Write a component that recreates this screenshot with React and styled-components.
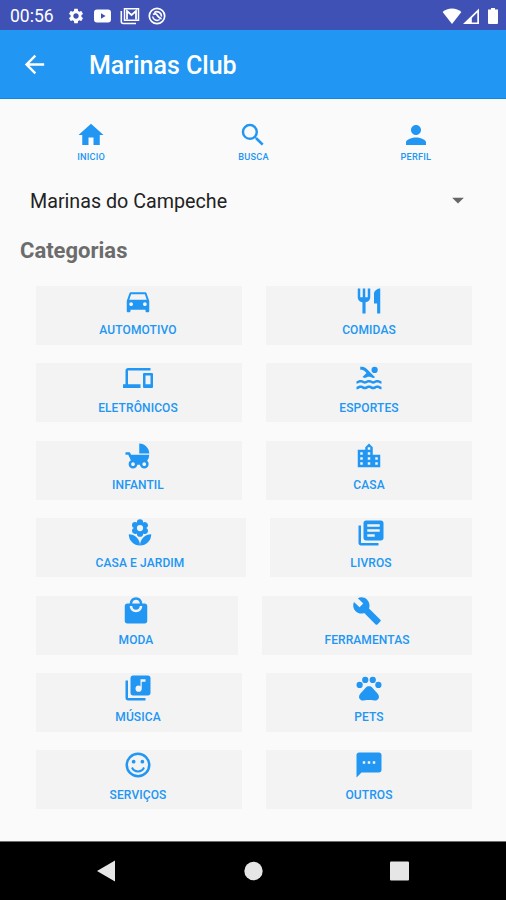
import styled, { createGlobalStyle } from "styled-components";
import {
  MdArrowBack,
  MdArrowDropDown,
  MdChildFriendly,
  MdDevices,
  MdHome,
  MdLibraryBooks,
  MdLibraryMusic,
  MdLocalFlorist,
  MdLocalMall,
  MdLocationCity,
  MdPerson,
  MdPets,
  MdPool,
  MdRestaurant,
  MdSearch,
  MdSettings,
  MdSms,
} from "react-icons/md";

const GlobalStyle = createGlobalStyle`
  * {
    box-sizing: border-box;
  }
  body {
    margin: 0;
    background: #fafafa;
    font-family: Roboto, "Liberation Sans", sans-serif;
  }
  svg {
    display: block;
    flex-shrink: 0;
  }
  button {
    border: none;
    padding: 0;
    font-family: inherit;
  }
`;

const Screen = styled.div`
  width: 506px;
  height: 900px;
  display: flex;
  flex-direction: column;
  background: #fafafa;
  overflow: hidden;
`;

const StStatusBar = styled.div`
  height: 30px;
  padding: 1px 6px 0 10px;
  display: flex;
  justify-content: space-between;
  align-items: center;
  background: #3f51b5;
  color: #fff;
`;

const StatusGroup = styled.div`
  display: flex;
  align-items: center;
  gap: ${({ $gap }) => $gap}px;
`;

const Clock = styled.span`
  width: 49px;
  padding-top: 1px;
  font-size: 17.5px;
  line-height: 20px;
`;

const AppBar = styled.header`
  height: 69px;
  padding: 0 20px;
  display: flex;
  align-items: center;
  gap: 40px;
  background: #2196f3;
  border-bottom: 1px solid #0d88e6;
  color: #fff;
`;

const AppTitle = styled.h1`
  margin: 4px 0 0;
  font-size: 25px;
  font-weight: 500;
  line-height: 30px;
`;

const Content = styled.main`
  flex: 1;
  display: flex;
  flex-direction: column;
`;

const TabRow = styled.nav`
  padding: 21px 9px 0 10px;
  display: grid;
  grid-template-columns: repeat(3, 1fr);
`;

const Tab = styled.button`
  height: 43px;
  display: flex;
  flex-direction: column;
  align-items: center;
  gap: 1px;
  background: transparent;
  color: #2196f3;
  font-size: 9.2px;
  font-weight: 500;
  letter-spacing: 0.2px;
  line-height: 12px;
`;

const Select = styled.div`
  height: 38px;
  margin-top: 19px;
  padding: 0 34px 0 30px;
  display: flex;
  justify-content: space-between;
  align-items: center;
  color: #222;
  font-size: 19.7px;
  svg {
    margin-bottom: 2px;
    color: #666;
  }
`;

const SectionTitle = styled.h2`
  margin: 17px 0 0 20px;
  color: #6c6c6c;
  font-size: 22px;
  font-weight: 700;
  line-height: 28px;
`;

const CategoryList = styled.div`
  margin: 21px 34px 0 36px;
  display: flex;
  flex-direction: column;
  gap: 18.4px;
`;

const CategoryRow = styled.div`
  display: flex;
  justify-content: space-between;
`;

const CategoryCard = styled.button`
  width: ${({ $width }) => $width}px;
  height: 59px;
  display: flex;
  flex-direction: column;
  align-items: center;
  gap: 6.4px;
  background: #f3f3f3;
  color: #2196f3;
  font-size: 12px;
  font-weight: 500;
  letter-spacing: 0.1px;
  line-height: 16px;
  &:first-child {
    padding-right: 2px;
  }
`;

const StNavBar = styled.div`
  height: 59px;
  padding: 0 96px;
  display: flex;
  justify-content: space-between;
  align-items: center;
  background: #000;
  border-top: 1px solid #6d6d6d;
`;

const CarIcon = ({ size }) => (
  <svg width={size} height={size} viewBox="0 0 24 24" fill="currentColor">
    <path d="M18.92 6.01C18.72 5.42 18.16 5 17.5 5h-11c-.66 0-1.21.42-1.42 1.01L3 12v8c0 .55.45 1 1 1h1c.55 0 1-.45 1-1v-1h12v1c0 .55.45 1 1 1h1c.55 0 1-.45 1-1v-8l-2.08-5.99zM6.5 16c-.83 0-1.5-.67-1.5-1.5S5.67 13 6.5 13s1.5.67 1.5 1.5S7.33 16 6.5 16zm11 0c-.83 0-1.5-.67-1.5-1.5s.67-1.5 1.5-1.5 1.5.67 1.5 1.5-.67 1.5-1.5 1.5zM5 11l1.5-4.5h11L19 11H5z" />
  </svg>
);

const WrenchIcon = ({ size }) => (
  <svg width={size} height={size} viewBox="0 0 24 24" fill="currentColor">
    <path d="M22.7 19l-9.1-9.1c.9-2.3.4-5-1.5-6.9-2-2-5-2.4-7.4-1.3L9 6 6 9 1.6 4.7C.4 7.1.9 10.1 2.9 12.1c1.9 1.9 4.6 2.4 6.9 1.5l9.1 9.1c.4.4 1 .4 1.4 0l2.3-2.3c.5-.4.5-1.1.1-1.4z" />
  </svg>
);

const SmileIcon = ({ size }) => (
  <svg width={size} height={size} viewBox="0 0 24 24" fill="none" stroke="currentColor">
    <circle cx="12" cy="12" r="9" strokeWidth="2" />
    <path strokeWidth="1.6" d="M7.2 14c.8 1.900 2.600 3.100 4.800 3.100s4-1.200 4.800-3.100" />
    <circle cx="8.5" cy="9.300" r="1.500" fill="currentColor" stroke="none" />
    <circle cx="15.500" cy="9.300" r="1.500" fill="currentColor" stroke="none" />
  </svg>
);

const categories = [
  [
    { label: "AUTOMOTIVO", Icon: CarIcon, width: 206 },
    { label: "COMIDAS", Icon: MdRestaurant, width: 206 },
  ],
  [
    { label: "ELETRÔNICOS", Icon: MdDevices, width: 206 },
    { label: "ESPORTES", Icon: MdPool, width: 206 },
  ],
  [
    { label: "INFANTIL", Icon: MdChildFriendly, width: 206 },
    { label: "CASA", Icon: MdLocationCity, width: 206 },
  ],
  [
    { label: "CASA E JARDIM", Icon: MdLocalFlorist, width: 210 },
    { label: "LIVROS", Icon: MdLibraryBooks, width: 202 },
  ],
  [
    { label: "MODA", Icon: MdLocalMall, width: 202 },
    { label: "FERRAMENTAS", Icon: WrenchIcon, width: 210 },
  ],
  [
    { label: "MÚSICA", Icon: MdLibraryMusic, width: 206 },
    { label: "PETS", Icon: MdPets, width: 206 },
  ],
  [
    { label: "SERVIÇOS", Icon: SmileIcon, width: 206 },
    { label: "OUTROS", Icon: MdSms, width: 206 },
  ],
];

const tabs = [
  { label: "INICIO", Icon: MdHome },
  { label: "BUSCA", Icon: MdSearch },
  { label: "PERFIL", Icon: MdPerson },
];

const StatusBar = () => {
  return (
    <StStatusBar>
      <StatusGroup $gap={8}>
        <Clock>00:56</Clock>
        <MdSettings size={18} />
        {/* youtube */}
        <svg width="19" height="18" viewBox="0 0 19 18">
          <path
            fill="#fff"
            fillRule="evenodd"
            d="M4 2.5h11a3 3 0 0 1 3 3v7a3 3 0 0 1-3 3H4a3 3 0 0 1-3-3v-7a3 3 0 0 1 3-3zM8 6.2v5.6L12.6 9z"
          />
        </svg>
        {/* gmail */}
        <svg width="20" height="18" viewBox="0 0 20 18">
          <path fill="none" stroke="#fff" strokeWidth="1.6" d="M1.3 4v10.5a2 2 0 0 0 2 2H16" />
          <path fill="none" stroke="#fff" strokeWidth="1.8" d="M7 12.5V4l4.5 4L16 4v8.5" />
          <path fill="none" stroke="#fff" strokeWidth="1.5" d="M4.5 1.7h14v11.6h-14z" />
        </svg>
        <svg width="18" height="18" viewBox="0 0 18 18">
          <g fill="none" stroke="#fff">
            <circle cx="9" cy="9" r="7.7" strokeWidth="1.7" />
            <path strokeWidth="1.5" d="M11.7 12.5A4.5 4.5 0 0 1 4.6 9.5M6.2 5.6a4.5 4.5 0 0 1 7.2 4" />
            <path strokeWidth="1.8" d="M5 7.6c2-1.4 3.4-.6 4.3.8s2 2.6 4.2 3.4" />
          </g>
        </svg>
      </StatusGroup>
      <StatusGroup $gap={1}>
        <svg width="20" height="18" viewBox="0 0 20 18">
          <path fill="#fff" d="M10 17 .6 5C3 2.8 6.3 1.4 10 1.4S17 2.8 19.4 5z" />
        </svg>
        <svg width="17" height="18" viewBox="0 0 17 18">
          <path
            fill="#fff"
            fillRule="evenodd"
            d="M0 17 16 1.5V17zM14.3 5.5 8.8 11V15.4h5.5z"
          />
        </svg>
        <svg width="19" height="18" viewBox="0 0 19 18">
          <path fill="#fff" d="M7 2.6h3V1h4v1.600h3V16a1 1 0 0 1-1 1H8a1 1 0 0 1-1-1z" />
        </svg>
      </StatusGroup>
    </StStatusBar>
  );
};

const NavBar = () => {
  return (
    <StNavBar>
      <svg width="20" height="22" viewBox="0 0 20 22">
        <path fill="#e6e6e6" d="M19 .5v21L1 11z" />
      </svg>
      <svg width="20" height="20" viewBox="0 0 20 20">
        <circle cx="10.5" cy="10" r="9.2" fill="#e6e6e6" />
      </svg>
      <svg width="20" height="20" viewBox="0 0 20 20">
        <rect x="0" y=".5" width="19" height="19" rx="1" fill="#e6e6e6" />
      </svg>
    </StNavBar>
  );
};

const App = () => {
  return (
    <Screen>
      <GlobalStyle />
      <StatusBar />
      <AppBar>
        <MdArrowBack size={29} />
        <AppTitle>Marinas Club</AppTitle>
      </AppBar>
      <Content>
        <TabRow>
          {tabs.map(({ label, Icon }) => (
            <Tab key={label}>
              <Icon size={30} />
              {label}
            </Tab>
          ))}
        </TabRow>
        <Select>
          Marinas do Campeche
          <MdArrowDropDown size={28} />
        </Select>
        <SectionTitle>Categorias</SectionTitle>
        <CategoryList>
          {categories.map((row) => (
            <CategoryRow key={row[0].label}>
              {row.map(({ label, Icon, width }) => (
                <CategoryCard key={label} $width={width}>
                  <Icon size={30} />
                  {label}
                </CategoryCard>
              ))}
            </CategoryRow>
          ))}
        </CategoryList>
      </Content>
      <NavBar />
    </Screen>
  );
};

export default App;
